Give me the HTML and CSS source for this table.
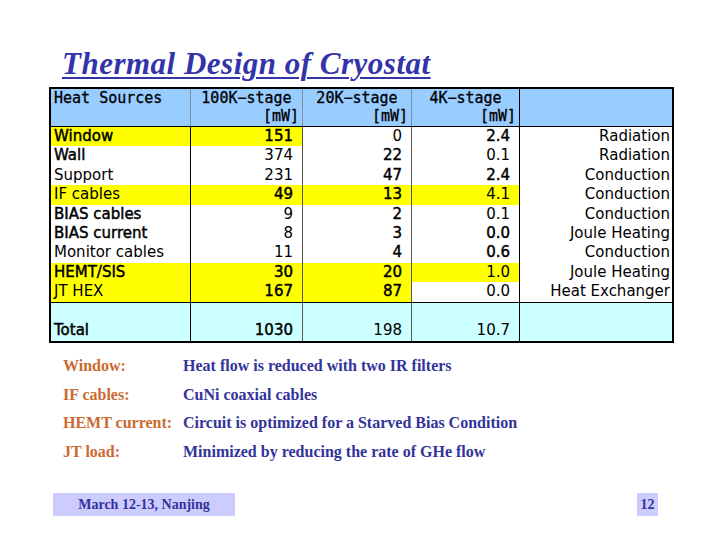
FILE: index.html
```html
<!DOCTYPE html>
<html>
<head>
<meta charset="utf-8">
<link rel="stylesheet" href="styles.css">
</head>
<body>
<div class="slide">
  <h1 class="title">Thermal Design of Cryostat</h1>
  <div class="sheet">
    <div class="row head">
      <div class="c c1">Heat Sources</div>
      <div class="c c2 soft"><span class="l1">100K−stage</span><span class="l2">[mW]</span></div>
      <div class="c c3 soft"><span class="l1">20K−stage</span><span class="l2">[mW]</span></div>
      <div class="c c4 hard"><span class="l1">4K−stage</span><span class="l2">[mW]</span></div>
      <div class="c c5"></div>
    </div>
    <div class="row">
      <div class="c c1 y b">Window</div>
      <div class="c n y b">151</div>
      <div class="c n soft">0</div>
      <div class="c n hard b">2.4</div>
      <div class="c t">Radiation</div>
    </div>
    <div class="row">
      <div class="c c1 b">Wall</div>
      <div class="c n">374</div>
      <div class="c n soft b">22</div>
      <div class="c n hard">0.1</div>
      <div class="c t">Radiation</div>
    </div>
    <div class="row">
      <div class="c c1">Support</div>
      <div class="c n">231</div>
      <div class="c n soft b">47</div>
      <div class="c n hard b">2.4</div>
      <div class="c t">Conduction</div>
    </div>
    <div class="row">
      <div class="c c1 y">IF cables</div>
      <div class="c n y b">49</div>
      <div class="c n soft y b">13</div>
      <div class="c n hard y">4.1</div>
      <div class="c t">Conduction</div>
    </div>
    <div class="row">
      <div class="c c1 b">BIAS cables</div>
      <div class="c n">9</div>
      <div class="c n soft b">2</div>
      <div class="c n hard">0.1</div>
      <div class="c t">Conduction</div>
    </div>
    <div class="row">
      <div class="c c1 b">BIAS current</div>
      <div class="c n">8</div>
      <div class="c n soft b">3</div>
      <div class="c n hard b">0.0</div>
      <div class="c t">Joule Heating</div>
    </div>
    <div class="row">
      <div class="c c1">Monitor cables</div>
      <div class="c n">11</div>
      <div class="c n soft b">4</div>
      <div class="c n hard b">0.6</div>
      <div class="c t">Conduction</div>
    </div>
    <div class="row">
      <div class="c c1 y b">HEMT/SIS</div>
      <div class="c n y b">30</div>
      <div class="c n soft y b">20</div>
      <div class="c n hard y">1.0</div>
      <div class="c t">Joule Heating</div>
    </div>
    <div class="row">
      <div class="c c1 y">JT HEX</div>
      <div class="c n y b">167</div>
      <div class="c n soft y b">87</div>
      <div class="c n hard">0.0</div>
      <div class="c t">Heat Exchanger</div>
    </div>
    <div class="row total">
      <div class="c c1 b">Total</div>
      <div class="c n b">1030</div>
      <div class="c n soft">198</div>
      <div class="c n hard">10.7</div>
      <div class="c t"></div>
    </div>
  </div>

  <div class="notes">
    <div class="lab">Window:</div><div class="val">Heat flow is reduced with two IR filters</div>
    <div class="lab">IF cables:</div><div class="val">CuNi coaxial cables</div>
    <div class="lab">HEMT current:</div><div class="val">Circuit is optimized for a Starved Bias Condition</div>
    <div class="lab">JT load:</div><div class="val">Minimized by reducing the rate of GHe flow</div>
  </div>

  <div class="footer">
    <div class="fbox date">March 12-13, Nanjing</div>
    <div class="fbox page">12</div>
  </div>
</div>
</body>
</html>
```
FILE: styles.css
```css
html, body {
  margin: 0;
  padding: 0;
  background: #ffffff;
}

.slide {
  width: 720px;
  height: 540px;
  display: flex;
  flex-direction: column;
}

.title {
  margin: 47px 0 0 62px;
  font-family: "Liberation Serif", "Times New Roman", serif;
  font-size: 31px;
  line-height: 34px;
  letter-spacing: 0.5px;
  font-weight: bold;
  font-style: italic;
  color: #3333aa;
  text-decoration: underline;
  text-decoration-thickness: 2px;
  text-underline-offset: 3px;
}

.sheet {
  margin: 6px 0 0 49px;
  width: 625px;
  box-sizing: border-box;
  border: 2px solid #000;
  font-family: "DejaVu Sans", sans-serif;
  font-size: 15px;
  color: #000;
}

.row {
  display: grid;
  grid-template-columns: 139px 112px 109px 108px 153px;
  height: 19.4px;
  line-height: 19.4px;
}

.c {
  box-sizing: border-box;
  white-space: nowrap;
  overflow: hidden;
}

.c + .c {
  border-left: 1px solid #000;
}

.c + .c.soft,
.c + .c.hard {
  border-left-color: #555;
}

.c1 { padding-left: 3px; }
.n { text-align: right; padding-right: 9px; }
.t { text-align: right; padding-right: 2px; }

.y { background: #ffff00; }
.b { -webkit-text-stroke: 0.45px #000; }

.head {
  height: 37px;
  background: #99ccff;
  border-bottom: 1px solid #000;
  font-family: "DejaVu Sans Mono", monospace;
  font-size: 15px;
  line-height: 18px;
  -webkit-text-stroke: 0.3px #000;
}

.head .c {
  display: flex;
  flex-direction: column;
}

.head .c + .c.soft,
.head .c + .c.hard {
  border-left-color: #7f8fa6;
}

.head .l1 { text-align: center; }
.head .l2 { text-align: right; padding-right: 3px; }

.total {
  height: 38px;
  background: #ccffff;
  border-top: 1px solid #000;
}

.total .c {
  padding-top: 18px;
  line-height: 19px;
}

.notes {
  margin: 9px 0 0 63px;
  display: grid;
  grid-template-columns: 120px auto;
  grid-auto-rows: 28.7px;
  align-items: center;
  font-family: "Liberation Serif", "Times New Roman", serif;
  font-size: 16px;
  font-weight: bold;
}

.lab { color: #cc6a2e; }
.val { color: #333399; }

.footer {
  margin: 27px 62px 0 53px;
  display: flex;
  justify-content: space-between;
}

.fbox {
  height: 23px;
  line-height: 23px;
  background: #ccccff;
  color: #333399;
  font-family: "Liberation Serif", "Times New Roman", serif;
  font-size: 14px;
  font-weight: bold;
  text-align: center;
}

.date { width: 182px; }
.page { width: 21px; }
```
